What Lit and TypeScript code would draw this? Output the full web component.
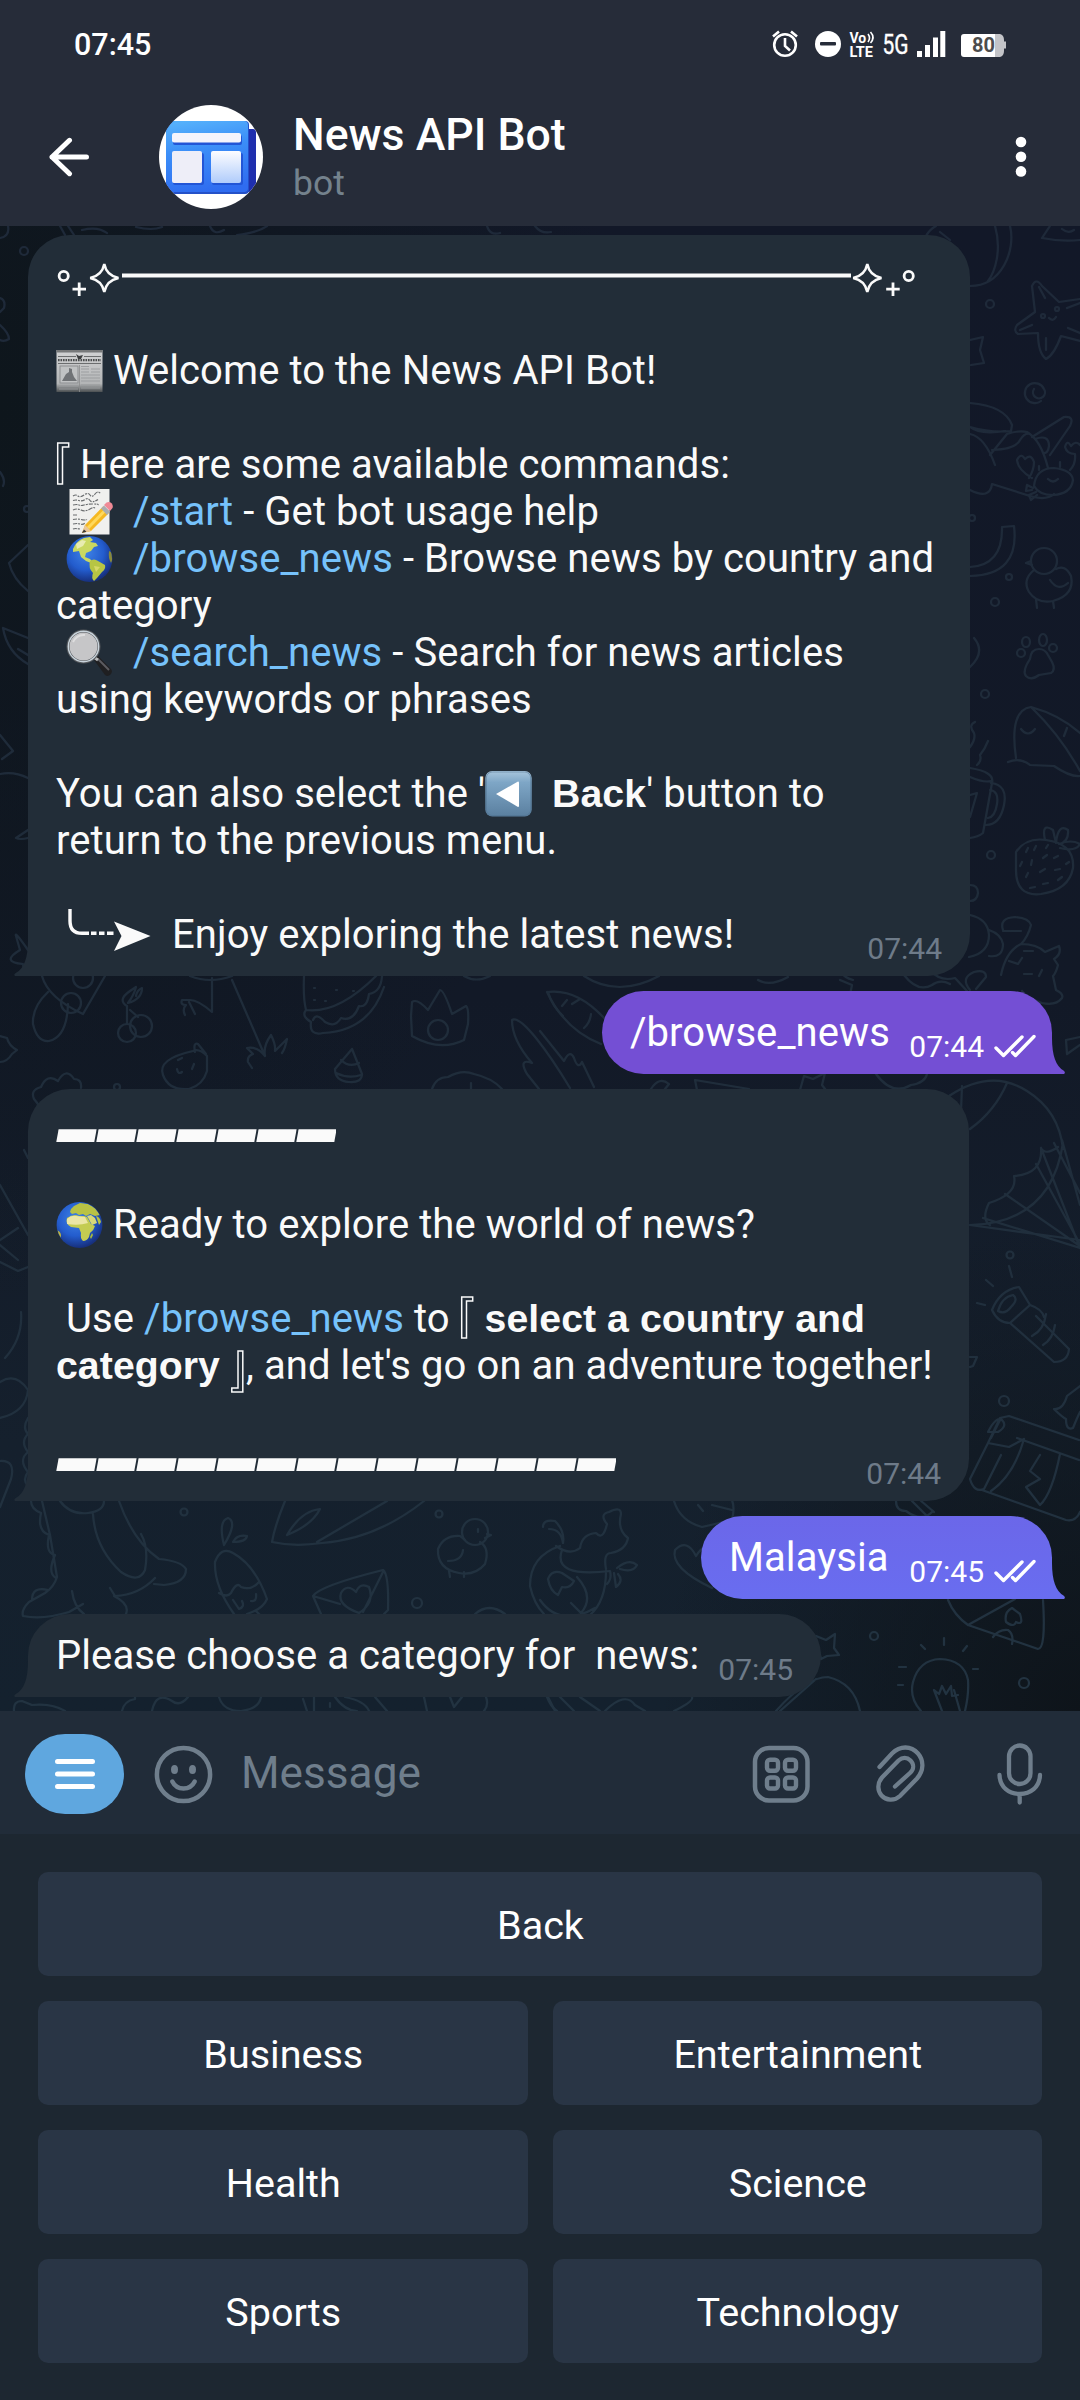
import { LitElement, html, css, svg, nothing } from "lit";
import { customElement, property } from "lit/decorators.js";

/* ---------- inline emoji and ornaments, each 47px tall like a text line ---------- */

const newspaper = html`<svg class="emo" width="47" height="47" viewBox="0 0 47 47">
  <defs><linearGradient id="np" x1="0" y1="0" x2="0" y2="1"><stop offset="0" stop-color="#d2d3d4"/><stop offset=".8" stop-color="#b3b5b6"/><stop offset="1" stop-color="#4c5052"/></linearGradient></defs>
  <rect x=".5" y="3" width="46" height="42" fill="url(#np)"/>
  <rect x=".5" y="3" width="46" height="2.500" fill="#77797a"/>
  <path d="M2 9.500h18M28 9.500h17M2 16.500h43" stroke="#6b6d6e" stroke-width="1"/>
  <path d="M20 7l3 2 4-1-2 4h-3z" fill="#3c3e3f"/>
  <path d="M2 13.200h43" stroke="#4b4d4e" stroke-width="2.200" stroke-dasharray="1.600 .9"/>
  <rect x="4" y="19" width="18" height="17" fill="#c0c2c3" stroke="#8c8e90"/>
  <path d="M6 34l4-7 3-2v-4l3 1v3l2 5 3 4z" fill="#707376"/>
  <path d="M25 19.500h8M25 22h8M25 25h8M25 28h19M25 31h19M25 34h19M35 22h9M35 25h9M3 39h19M3 42h19M25 38h19M25 41h19" stroke="#989b9d" stroke-width=".9"/>
  <path d="M23.500 18v27" stroke="#8b8d8e" stroke-width=".8"/>
</svg>`;

const memo = html`<svg class="emo" width="47" height="47" viewBox="0 0 47 47">
  <rect x="3.500" y="1" width="40" height="45.500" fill="#f0f0ee"/>
  <path d="M7 8q3-2 5 0t6-1 6 0 5-1 6 0M7 12.500q3-1 6 0t6-1 5 1 8-1M7 17q4-1 6 0t5 0 9-1 5 1M7 22q4-2 8 0t9-1 5 0M7 27h5M7 31.500q4-1 8 0t6 0M7 36q4-1 7 0t5-1M7 41q2-1 7 0" fill="none" stroke="#6a6d6f" stroke-width="1.200" stroke-dasharray="4 1 2 1"/>
  <path d="M19 37L37 18.500 43 25 25 43 16 45z" fill="#f5b822"/>
  <path d="M22 40L40 21.500" stroke="#ffd95c" stroke-width="3"/>
  <path d="M19 37l6 6-9 2z" fill="#e9c79a"/><path d="M18 41.500l2.500 2.300-4.700 1.200z" fill="#3a3836"/>
  <path d="M35 20.500l3-3 6 6-3 3.500z" fill="#a9adb0"/>
  <path d="M38 17l2.500-2.500q3-1.500 5 .8t1 4.700L44 23z" fill="#f08a96"/>
</svg>`;

const globe = (id: string, land: unknown) => html`<svg class="emo" width="47" height="47" viewBox="0 0 47 47">
  <defs>
    <radialGradient id=${id} cx=".42" cy=".35" r=".65"><stop offset="0" stop-color="#3f83e6"/><stop offset=".6" stop-color="#235ccd"/><stop offset="1" stop-color="#17307e"/></radialGradient>
    <clipPath id="${id}c"><circle cx="23.500" cy="24" r="22.600"/></clipPath>
  </defs>
  <circle cx="23.500" cy="24" r="22.900" fill="url(#${id})"/>
  <g clip-path="url(#${id}c)">${land}</g>
</svg>`;

const americas = () => globe("ga", svg`
  <path d="M7 14q3-8 11-11l6-1 3 3-3 2 6 1 2 3-4 1-3 4-5 2-1 4 5 2 3 3-2 1-5-2-5-4-2-6-6 1z" fill="#c9d860"/>
  <path d="M10 9l6-4 4 1-3 5-6 3z" fill="#e8ecb0"/>
  <path d="M24 26q4-3 8 0l7 4q1 4-3 7l-5 6-3 3q-3-3-1-8-5-5-3-12z" fill="#b7c544"/>
  <path d="M28 31l6 1-4 5z" fill="#d7d968"/>
  <path d="M43 16q4 1 4 8l-2 4q-3-5-2-12z" fill="#8a8a3a"/>`);

const africa = () => globe("gb", svg`
  <path d="M15 8l3-3 6-3 8 1 7 4 5 7-5 1-5-2-4 2-3-2-4 1-3-2-4 1-2-2z" fill="#b9c244"/>
  <path d="M11 17q4-3 9-3l3 1 5 0 3 1 4 7 4 2q-1 4-5 7l-1 4q-2 4-6 4-3-3-2-8l-2-5-8-1q-6-3-4-9z" fill="#c4cc52"/>
  <path d="M11 18q4-4 9-3l9 1 3 6q-9 3-21 1z" fill="#ebe6a6"/>
  <path d="M31 15l4-1 4 3 2 5-5 2z" fill="#d8d878"/>
  <path d="M40 15q4 1 5 6l-2 3z" fill="#b9c244"/>
  <path d="M0 29q5 1 5 6l-2 5-3-2z" fill="#c2b83b"/>
  <path d="M34 36l2-4 1 2-2 4z" fill="#a9bb3b"/>`);

const magnifier = html`<svg class="emo" width="47" height="47" viewBox="0 0 47 47">
  <path d="M28 31l4-4 13 13q2 3-.5 5.500t-5.500.5z" fill="#1f1f21"/>
  <path d="M32 30l11 11" stroke="#5c5c60" stroke-width="2"/>
  <path d="M26 27l6 4" stroke="#b8babc" stroke-width="3"/>
  <circle cx="17.500" cy="17.500" r="15.500" fill="#c6c6c8" stroke="#54575b" stroke-width="3"/>
  <circle cx="17.500" cy="17.500" r="15.200" fill="none" stroke="#c9d4dc" stroke-width="1.400"/>
  <path d="M7 13q4-8 12-7" fill="none" stroke="#dededf" stroke-width="2"/>
</svg>`;

const backKey = html`<svg class="emo" width="47" height="47" viewBox="0 0 47 47">
  <defs><linearGradient id="bk" x1="0" y1="0" x2="0" y2="1"><stop offset="0" stop-color="#a9c6dd"/><stop offset=".25" stop-color="#7ea6c6"/><stop offset="1" stop-color="#5a7f9f"/></linearGradient></defs>
  <rect x=".3" y="1" width="46.400" height="45.600" rx="7" fill="url(#bk)"/>
  <rect x="1.300" y="2" width="44.400" height="43.600" rx="6" fill="none" stroke="#4d708e" stroke-opacity=".5"/>
  <path d="M11 24L33 11.500q1 0 1 1v23.500q0 1-1 1z" fill="#fff"/>
</svg>`;

const bracketOpen = html`<svg class="emo" width="14" height="47" viewBox="0 0 14 47"><path d="M1.700 43V2h11v4H6.500v37z" fill="none" stroke="#fafafa" stroke-width="1.500"/></svg>`;
const bracketClose = html`<svg class="emo tall" width="15" height="52" viewBox="0 0 15 52"><path d="M11.800 9v41H.8v-4h6.200V9z" fill="none" stroke="#fafafa" stroke-width="1.500"/></svg>`;

const bars = (n: number) => html`<svg class="emo" width=${n * 40} height="47" viewBox="0 0 ${n * 40} 47">
  ${Array.from({ length: n }, (_, i) => svg`<path d="M${i * 40 + 2.6} 22.300h38l-2.300 12.700h-38z" fill="#fafafa"/>`)}
</svg>`;

const divider = html`<svg class="emo" width="862" height="47" viewBox="56 253 862 47" fill="none" stroke="#fafafa">
  <circle cx="63.700" cy="276" r="4.600" stroke-width="2.800"/>
  <path d="M79.200 282.500v13.500M72.500 289.200h13.500" stroke-width="2.800"/>
  <path d="M104.300 264Q106.500 275.500 118.500 278Q106.500 280.500 104.300 292Q102 280.500 90.200 278Q102 275.500 104.300 264z" stroke-width="2.500"/>
  <path d="M122 275.600H851" stroke-width="4"/>
  <path d="M867.300 264Q869.500 275.500 881.500 278Q869.500 280.500 867.300 292Q865 280.500 853.200 278Q865 275.500 867.300 264z" stroke-width="2.500"/>
  <path d="M893 282.500v13.500M886.200 289.200h13.500" stroke-width="2.800"/>
  <circle cx="908.700" cy="276" r="4.600" stroke-width="2.800"/>
</svg>`;

const curlArrow = html`<svg class="emo" width="86" height="47" viewBox="66 911 86 47" overflow="visible">
  <path d="M70 909v12q0 12.300 12 12.300h7M91 933.300h5.500M99 933.300h5.500M107 933.300h6.500" fill="none" stroke="#fafafa" stroke-width="3.400"/>
  <path d="M114 921.500L150.500 936 114 951l7.500-15z" fill="#fafafa"/>
</svg>`;

const ticks = html`<svg class="ticks" width="42" height="26" viewBox="0 0 42 26" fill="none" stroke="#fff" stroke-width="3.400" stroke-linecap="round" stroke-linejoin="round">
  <path d="M2 15l7.500 7.500L28 4M18.500 19.500l3 3L40 3.500"/>
</svg>`;

/* ---------- wallpaper doodles, in page coordinates ---------- */

const doodles = svg`
  <path d="M926 236Q930 229 936 226M1010 226C1016 250 1002 286 970 286M995 226C1002 250 995 272 988 281M940 232l10 8M1050 226l-8 12q20 4 38 2M1062 229q6 5 12 1"/>
  <circle cx="990" cy="304" r="4"/><circle cx="995" cy="602" r="4"/><circle cx="1009" cy="577" r="3"/><circle cx="985" cy="694" r="4"/><circle cx="991" cy="855" r="4"/><circle cx="972" cy="518" r="3"/>
  <path d="M1080 299l-21 3-17-16q-6-9-10 0l3 26-18 13q-4 6 1 9l20-1q0 20 8 26 8-4 15-23l19 5M1039 287l6 11M1020 330l12-5M1046 338v12M1067 308l13-5M1068 328l12 5M1049 318q4 4 7-1"/>
  <circle cx="1043" cy="316" r="2"/><circle cx="1057" cy="309" r="2"/>
  <path d="M970 340l13-3-3 13 4 13-13 2"/>
  <path d="M1041 401a10 10 0 1 1 3-12a6 6 0 1 1-10 0"/>
  <path d="M970 403Q1005 406 1012 425l-1 6q-20 2-41-4M970 434q15 3 25 31M970 427q10 8 35 4M990 455l17-21q12-4 20-2 14 8 21 36M992 450q24-1 28-10 5-8 10-6M1032 437l32-20q11-1 6 9l-20 29M1035 439q14-5 14 7-1 8-6 7M970 490q20 10 22-6l38 12q16 5 24-2"/>
  <path d="M1034 486q2-18 20-18 18 2 19 12-2 14-20 15-14 0-19-9zM1048 479q5 5 10 0M1032 478q-14-8-15-18 4-8 8-1 6-6 9 3 0 8-5 16M1070 470q6-6 5-16-8 0-10-7 2-8 6-1 5-6 9-1M1033 488l-6-3-1 6 6-1M1036 492l-7 3 2 5 6-5M1039 470v-4M1060 467v-5"/>
  <path d="M1002 527l12-1Q1020 575 970 576M1002 527Q1003 565 970 567"/>
  <circle cx="1044" cy="561" r="13"/><path d="M1031 561l-5 2 6 2M1034 570q-12 10-5 22 8 12 24 9 22-6 18-25-6-12-15-7M1050 580q8 12 18 3M1036 599l1 9M1053 601l1 7"/>
  <path d="M1039 649q-8 0-9 10-8 12-4 17 5 5 13-1l12-2q5-3 1-11l-4-7q-3-6-9-6z"/>
  <ellipse cx="1026" cy="642" rx="4" ry="5"/><ellipse cx="1043" cy="640" rx="4" ry="6"/><ellipse cx="1053" cy="648" rx="4" ry="4"/><ellipse cx="1021" cy="653" rx="4" ry="4"/>
  <path d="M974 638q12 14-4 29M1016 758Q1009 710 1031 707Q1060 715 1080 733M1032 708q28 27 48 63M1008 762q12-5 22 3l24 1q16 11 26 10M1021 729q7 9 14 0M1067 728l-3 8"/>
  <path d="M970 768q25 4 22 15l-9 50q-5 4-13 5M970 777q14 6 21 4M991 783q17 2 13 22-4 20-18 20M990 790q9 1 7 14-2 13-9 14M977 765q5-4 3-10 5-6 8-14M970 747q6-8 4-14-6-8 1-11M970 795l7-2-7 24"/>
  <path d="M1016 852q10-15 30-12 29 4 27 28-4 22-32 26-25 3-25-24zM1045 840q-4-18 8-10l3 13q2-20 12-13 1 12-9 14 12-5 21 0-4 8-20 4"/>
  <path d="M1026 852l2-4M1034 850l2-4M1046 848l2-3M1022 862l-2 4M1032 860l-1 5M1043 858l4-3M1054 858l4-2M1028 873l-2 4M1040 872l5-3M1055 870l5-1M1030 888l5-1M1043 884l5-1M1058 880l4-3M1066 864l3-2" />
  <path d="M970 885q8 0 8 8-1 8-8 8M970 915q18 4 19 20 0 18-20 22M989 930q12 4 14 14 0 14-14 12M1003 930q-4-12 12-13 14 1 16 8-3 12-10 19 16 0 24 8l14-6q3 8-5 13l4 6q-2 8-5 11l3 14q8 4 6 8-6 8-20 5-16-5-20-12M1003 931l18 0M1001 975q5-24 20-31M1024 951h9M1024 974h8M1009 961l9 3 4-6M1042 970l-3 6"/>
  <path d="M904 975q14 18 28 10 8-6 18-1M970 990q-10-12 4-18 12-3 12 5l-10 12M930 970q10 12 25 8l12 13"/>
  <path d="M547 992q30-4 58 27M547 992q18 38 54 52M572 1004l8-5M562 1006l5-6M584 1028q6-5 7-14M540 1031l24 30q6-12 10-3 4 12 8 4l12 25"/>
  <path d="M672 998q10-2 20 1M584 976q34 22 75 0M840 980l12 5-2 10M845 960q-10 15 8 20M758 980q12 7 30-3M842 997q8-8 12 0"/>
  <path d="M876 1074q16 22 35 11 14-2 16-11M800 1090l4-14 9 3 12-6-3 12 6 8-12 1-4 6zM697 1090l-2-10 54 9M651 1089q8-13 18-5l-4 5M1080 1045l-13 9-1-14 14-3"/>
  <path d="M949 1096q42-28 78-5 32 20 36 58M962 1086l-1 25M1007 1083q-12 28-37 46M970 1225l110 15M1041 1148l39 100M1036 1164l44 80M1054 1143l26 50M1062 1140l18 65M1041 1148q4 8 17-1M1041 1148q2 26-27 28 4 18-25 27-8 16 1 22M1063 1143q-12 80-93 82M1005 1194l75 52M983 1218l97 30"/>
  <circle cx="1010" cy="1255" r="3.500"/><circle cx="1004" cy="1401" r="5"/>
  <path d="M1009 1266l3 11M986 1280l7 6M977 1303l8 2M992 1310q8-20 27-23l11 18-20 18q-12 0-18-13zM998 1311q4-14 15-16 6 4-2 12-6 8-13 4zM1010 1323l44 39q14 0 15-13l-33-33M1030 1305q12 4 14 12M1032 1336q12-6 14-22M1043 1345q10-6 12-20"/>
  <path d="M970 1357l7 0-4 9-3 1M1080 1386l-13 10q-4 14-13 13 8 8 12 10 0 12 7 9 4-10 7-16"/>
  <path d="M988 1443l12-25 9-2 70 24M988 1443l-18 36q4 14 14 10l17-34M988 1443l21 4 15-8M982 1490l84 30q10 2 14-8M1024 1439q-10 36-33 52M1017 1438l62 22M1060 1454q-8 40-20 51l-14-18 14-8-10-8 10-16M1001 1418l-10 20M988 1432q8-16 14-12 6 6-4 12z"/>
  <path d="M896 1501q0 10 10 10 16 12 27 0M912 1501l14 14M920 1500l14 12M674 1501q6 20 28 26l30-7q3-12 0-20M698 1505l5 6M712 1505l20 5"/>
  <path d="M712 1588q-42-20-37-38 12-12 21 6 10-16 22-8"/>
  <path d="M543 1527q0-8 12-6 10 10 8 22-2-14-14-14M556 1546q14 10 24 2 2-14 16-15 7 8 11-9-8-10 2-12 12-6 12 2-4 16 7 24-2 12-17 15-8 0-5 16M562 1550q-10 28 48 21 2 8-3 13M606 1571q0 30-16 44M540 1600q20 28 55 8M617 1568q12-10 20-3-4 8-17 4M614 1573l2 14q8-6 2-13M548 1579q4-10 14-6l12 8q-4 8-12 6l-4 8q-8-4-10-16zM577 1577q18 20 4 36l-10-10"/>
  <path d="M948 1600q6 15 20 25l70 24q8 0 5-49M968 1625l47-26M993 1637q6-8 15-7 6 4 4 14M1012 1608q-8 4-6 14 8 6 10 0 8 4 4-8z"/>
  <circle cx="874" cy="1636" r="4"/><circle cx="1024" cy="1683" r="5"/>
  <path d="M816 1636l10 4 9-6-1 14 5 7-12 1-6 3-2-8"/>
  <path d="M921 1711q-12-13-8-29 6-22 27-23 24 1 28 21 1 14-3 31M942 1711l-8-21 5 4 3-8 4 8 5-8 1 10 6-1M954 1690l6 21M944 1638v7M921 1645l4 4M967 1646l-4 5M899 1667h7M898 1685h5M973 1669h5"/>
  <path d="M776 1711q30-34 52-34 26 6 32 34M780 1711l36-32M547 1697q4 10 10 14M560 1697l14 14M580 1697l20 14M605 1711q20-20 30-6l10 6M674 1711q20-10 18-14"/>
  <circle cx="24" cy="251" r="4"/><circle cx="27" cy="509" r="3"/>
  <path d="M0 238q10-2 8-12M60 226l5 9M68 226l6 9M82 230q16-4 25 3M136 227q16 4 26 0M210 226q4 10 14 4M237 235q20-2 30-9M487 226q3 10 13 7M535 226q6 8 16 6M0 298q6 2 4 10l-4 4M0 325q9 8 9 14-5 3-9 1M0 472q6 8 3 14M28 545L9 563q4 16 19 28M0 735l13 16-11 8M0 774q14-3 28 4M28 830q-12 8-12 8 4 2 12 0M3 628q4 24 25 36M3 628l25 10M28 950q-14-20-12-14l4 14q-20 12 3 14l1 9M28 655l-10-6"/>
  <path d="M42 976q6 22 41 38l22-38M48 992q-16 15-15 32 4 18 16 17 18-4 19-37"/>
  <circle cx="83" cy="978" r="10"/><circle cx="71" cy="1003" r="10"/>
  <circle cx="127" cy="1033" r="9"/><circle cx="141" cy="1026" r="11"/>
  <path d="M127 1024v-18q-10-6 3-15l6-4q-2 8-8 16 14-4 14-15-5 2-6 8M130 1010l8 7"/>
  <path d="M190 976q20 8 42 0M212 978v34q-14-12-22-12l-8 0q-2 5 4 5-4 4-1 10M189 1002q4 8 6 12M232 980l33 76M265 1056q-8-10-18-8l6 6q-6 2-5 8l4 6M265 1056q-2-10 6-21 5 10 4 16l12-12q-2 10-5 14"/>
  <path d="M304 976q-1 22 2 34 32 4 70-34M306 1010q-5 6 5 12-2 14 12 11 46-2 61-46M313 1020q3-8 12 2 10 6 16-4 12 4 18-12 8 2 10-12 12-2 13-18M314 1000h1M325 1001h1M336 990h1M314 988h1M353 991h1"/>
  <path d="M412 1002q5-4 16 8l12-20q4 0 12 24l14-8q3 2 2 18l-4 16q-24 12-52-4l-1-20z"/><circle cx="438" cy="1030" r="10"/>
  <path d="M464 976q12 7 26 0M512 1020q6-4 24 18 16 20 34 50M512 1020q0 20 20 43-14-5-5 11l12 15M548 992q4 14 15 24M432 1089q4-12 16-12 14-8 26-3 18 4 28 15M471 1083v6"/>
  <path d="M352 1049l-17 20q0 12 14 13 13 1 13-8zM341 1060q8 8 18 3M336 1073q12 6 25 2"/>
  <path d="M193 1051q-36 8-30 24 6 16 26 14 14-4 18-18v-15q-8-8-14-5zM195 1052q-2-10 3-8l8 10M178 1060l4-2M177 1069q1 6 5 3M192 1069l2-5"/>
  <circle cx="117" cy="1087" r="3"/>
  <path d="M34 1099q-4-9 7-12 6-14 17-6 8-14 16-2 8 0 7 9M34 1099l4 5-6 28M0 1036l7 2q2 8 10 12l-5 4q-5 8-12 8M24 1150l4 8M0 1185l28 50M0 1240l18-12M0 1262l18 9 10-4M0 1245l18 15M21 1312q2 26-16 46M0 1418q26-6 28-28-12-18-28-8M28 1418q-6 10 0 16-8 8 0 18-10 8 0 20-6 8 0 14M0 1461q16-1 11 18l-11 28"/>
  <path d="M42 1501l8 34 7 42q-3 10-12 16l-16 9q-8 8-6 14 20 4 46-4l14-8M31 1501q0 8 10 12-4 18 8 22-4 18 6 20-8 18 1 23M32 1600q0-14 16-10M60 1501q10 14 28 12 16-2 16-12M93 1514q2 34 28 58 18 12 24-2 4-22-4-36M119 1501q14 40 40 58 22 2 27 10 0 14-22 16l-10-1M110 1588l5 8q24-1 40-18M72 1591q2 16 12 23M114 1596q16 8 12 18"/>
  <circle cx="184" cy="1512" r="3.500"/><circle cx="439" cy="1514" r="3.500"/><circle cx="417" cy="1603" r="5"/>
  <path d="M285 1501q-10 24-13 41 22 5 50 1 54-4 102-42M317 1542l70-41M287 1535q14-24 33-26-8 16-33 26zM224 1545q-6-24 4-27 10 4-4 27zM233 1542q4-8 14-6-1 6-14 6z"/>
  <path d="M234 1614q-20-28-19-52 6-16 18-9 22 12 34 46-4 10-20 15M219 1593q8 5 12 0 6-12 10-6 10 4 18-5M233 1600l6 9q6-2 3-8M256 1594q1 8-5 7M256 1611l4 4"/>
  <path d="M321 1614l-8-18q6-10 70-26 6 4 5 40l-4 4M313 1596l27 8M383 1572l-20 40M359 1613q-22-8-18-20 6-10 15-1 4-10 13-5 6 16-10 26M475 1614q14-12 30 0"/>
  <circle cx="475" cy="1532" r="13"/><path d="M487 1534l4 1-6 3M480 1542q10 6 5 22-10 12-26 9-22-4-21-24 6-14 22-13l5 4M448 1561q14 0 15-11M449 1571l1 6M464 1572v5M478 1529v3"/>
  <path d="M560 1546q-30 10-30 40 4 18 14 28M14 1711q-1-10 8-10 10 4 10 4 20-2 33 6M122 1711q2-10 13-12l0-2M152 1711q4-20 20-10 8 6 16-4M219 1697q4 14 22 14 18-2 20-14M303 1699l4 12M314 1697v14M335 1697q10 14 22 14M345 1697q20 4 24 14M375 1697l12 14M424 1697l3 14M450 1697l4 10 8-10M484 1711q5-6 2-14M548 1697l7 14M330 1703v4"/>
`;

const wallpaper = html`<svg class="wall" width="1080" height="1485" viewBox="0 226 1080 1485">
  <defs>
    <linearGradient id="dl" gradientUnits="userSpaceOnUse" x1="0" y1="226" x2="0" y2="1711">
      <stop offset="0" stop-color="#1e2939"/><stop offset=".5" stop-color="#1f2c3a"/><stop offset="1" stop-color="#223341"/>
    </linearGradient>
  </defs>
  <g fill="none" stroke="url(#dl)" stroke-width="2.200" stroke-linecap="round" stroke-linejoin="round">${doodles}</g>
</svg>`;

/* ---------- message bubble ---------- */

@customElement("chat-bubble")
class ChatBubble extends LitElement {
  @property() time = "";
  @property({ type: Boolean, reflect: true }) out = false;
  @property({ type: Boolean, reflect: true }) large = false;

  static styles = css`
    :host { display: block; position: relative; box-sizing: border-box; padding: 18px 28px; border-radius: 42px 42px 42px 0;
      background: #222d38; color: #fafafa; align-self: flex-start; margin-left: 28px; font-size: 40px; line-height: 47px; letter-spacing: .08px; }
    :host([out]) { align-self: flex-end; margin: 0 28px 0 0; background: var(--tint); color: #fff; border-radius: 42px 42px 0 42px; padding-right: 16px; }
    .row { display: flex; align-items: flex-end; justify-content: space-between; }
    .stack { display: grid; }
    .stack > * { grid-area: 1 / 1; }
    .stack > .time { place-self: end; }
    .time { font-size: 30px; line-height: 35px; color: #6e7b89; display: flex; align-items: center; margin-bottom: -8px; letter-spacing: 0; }
    :host([out]) .time { color: #fff; margin-bottom: -7.500px; }
    .tail { position: absolute; left: -14px; bottom: 0; }
    :host([out]) .tail { left: auto; right: -14px; }
    svg { display: block; flex: none; }
    .ticks { margin-left: 10px; }
  `;

  render() {
    return html`
      <svg class="tail" width="15" height="36" viewBox="0 0 15 36">
        <path d=${this.out ? "M0 0H1Q1 26 12.500 32.500Q15 34.500 13 36H0z" : "M15 0H14Q14 26 2.500 32.500Q-1 34.500 1 36H15z"}
          fill=${this.out ? "var(--tint-end)" : "#222d38"} />
      </svg>
      <div class=${this.large ? "stack" : "row"}>
        <div><slot></slot></div>
        <div class="time">${this.time}${this.out ? ticks : nothing}</div>
      </div>`;
  }
}

const line = (content: unknown = nothing) => html`<div class="line">${content}</div>`;
const cmd = (t: string) => html`<span class="cmd">${t}</span>`;

@customElement("app-root")
class AppRoot extends LitElement {
  static styles = css`
    :host { display: flex; flex-direction: column; width: 1080px; height: 2400px; overflow: hidden;
      font-family: Roboto, "Liberation Sans", sans-serif; background: #1d2731; color: #fff; }
    svg { display: block; flex: none; }

    .head { height: 226px; background: #262c39; flex: none; }
    .status { height: 88px; box-sizing: border-box; padding: 1px 68px 0 74px; display: flex; align-items: center; font-size: 30.500px; font-weight: 500; }
    .icons { margin-left: auto; margin-top: -1px; overflow: visible; }
    .bar { height: 138px; display: flex; align-items: center; padding: 0 48px 0 49px; }
    .avatar { margin-left: 70px; }
    .who { margin-left: 30px; margin-right: auto; display: flex; flex-direction: column; }
    .name { font-size: 44.600px; line-height: 52px; font-weight: 500; margin-top: -1px; }
    .kind { font-size: 35.500px; line-height: 42px; margin-top: 1px; color: #74828d; }

    .chat { position: relative; flex: none; height: 1485px; box-sizing: border-box; padding: 9px 0 14px; display: flex; flex-direction: column; gap: 15px;
      background: radial-gradient(ellipse 600px 700px at 100% 100%, #0e141a 0%, transparent 70%), radial-gradient(ellipse 620px 900px at 0% 12%, #0e161c 0%, transparent 100%),
        linear-gradient(180deg, #121828 0%, #121927 52%, #15202d 82%, #14212e 100%); }
    .wall { position: absolute; left: 0; top: 0; }
    .line { height: 47px; white-space: pre; }
    .emo { display: inline-block; vertical-align: top; }
    .tall { margin-bottom: -5px; }
    .cmd { color: #76c2fb; }
    .strong { font: bold 39.200px/47px "Liberation Sans", Arial, sans-serif; }
    .b1 { width: 942px; }
    .b2 { width: 450px; --tint: #744fd4; --tint-end: #7450d5; }
    .b3 { width: 941px; }
    .b4 { width: 351px; --tint: linear-gradient(#6b67e9, #696df0); --tint-end: #696df0; }
    .b5 { width: 793px; }

    .compose { height: 123px; flex: none; box-sizing: border-box; background: #212c39; display: flex; align-items: center; padding: 3px 36px 0 25px; }
    .menu { width: 99px; height: 80px; border-radius: 40px; background: #5fa7df; display: flex; align-items: center; justify-content: center; }
    .smile { margin-left: 30px; }
    .hint { font-size: 44.200px; line-height: 52px; color: #6f7e8c; margin-left: 28px; margin-right: auto; margin-top: -2px; }
    .apps { margin-right: 65px; }
    .clip { margin-right: 70px; }

    .keys { padding: 38px 38px 37px; display: grid; grid-template-columns: 1fr 1fr; gap: 25px; }
    .key { height: 104px; box-sizing: border-box; padding: 2px 0 0 1px; border-radius: 10px; background: #293545; font-size: 39.500px; display: flex; align-items: center; justify-content: center; }
    .wide { grid-column: 1 / -1; }
  `;

  private keys = ["Back", "Business", "Entertainment", "Health", "Science", "Sports", "Technology"];

  render() {
    return html`
      <header class="head">
        <div class="status">
          <span>07:45</span>
          <svg class="icons" width="241" height="52" viewBox="771 17 241 52">
            <g fill="none" stroke="#fff" stroke-width="2.600" stroke-linecap="butt">
              <circle cx="785" cy="44" r="10.800"/><path d="M785 37v8l5 4.500M773 35.500l6-5M797 35.500l-6-5" />
            </g>
            <circle cx="828" cy="43" r="13" fill="#fff"/><rect x="820" y="41" width="16" height="3.600" rx="1" fill="#262c39"/>
            <text x="849.500" y="42.300" font-size="14" font-weight="700" fill="#fff">Vo</text>
            <path d="M868 33q3 4 0 8M870.500 31q5 5.500 0 11" fill="none" stroke="#fff" stroke-width="1.600"/>
            <text x="849.500" y="56" font-size="14.500" font-weight="700" fill="#fff">LTE</text>
            <text x="882.500" y="52.700" font-size="27" font-weight="400" fill="#fff" stroke="#fff" stroke-width=".4" textLength="26" lengthAdjust="spacingAndGlyphs">5G</text>
            <path d="M917 50h5v6h-5zM925 44h5v12h-5zM933 36.500h5V56h-5zM940.300 30h5v26h-5z" fill="#fff"/>
            <path d="M995 33h5q4 1 4 6v1.500h2v7h-2V50q0 5-4 6h-5z" fill="#c3c4c8"/>
            <path d="M964 33h31v23h-31q-3 0-3-3V36q0-3 3-3z" fill="#fff"/>
            <text x="972" y="51.300" font-size="20" font-weight="700" fill="#4d4d4d">80</text>
          </svg>
        </div>
        <div class="bar">
          <svg width="40" height="40" viewBox="0 0 40 40" fill="none" stroke="#fff" stroke-width="5" stroke-linecap="round" stroke-linejoin="round"><path d="M37.500 20H3M20.500 3.300L3 20l17.500 16.700"/></svg>
          <svg class="avatar" width="104" height="104" viewBox="159 105 104 104">
            <defs>
              <linearGradient id="pg" x1=".3" y1="0" x2=".5" y2="1"><stop offset="0" stop-color="#55b0fb"/><stop offset=".4" stop-color="#3b8ef8"/><stop offset="1" stop-color="#2f6cf0"/></linearGradient>
              <linearGradient id="rb" x1="0" y1="0" x2="0" y2="1"><stop offset="0" stop-color="#fdfdff"/><stop offset="1" stop-color="#b0ccfb"/></linearGradient>
              <clipPath id="av"><circle cx="211" cy="157" r="52"/></clipPath>
            </defs>
            <circle cx="211" cy="157" r="52" fill="#fff"/>
            <g clip-path="url(#av)">
              <rect x="240" y="129" width="16" height="63" rx="3" fill="#1f2fae"/>
              <rect x="166" y="121" width="83" height="73" rx="4" fill="#2451c8"/>
              <rect x="166" y="121" width="82" height="71" rx="4" fill="url(#pg)"/>
              <g fill="#2255d6"><rect x="173" y="135" width="69" height="10" rx="2"/><rect x="173" y="153" width="31" height="32" rx="2"/><rect x="212" y="153" width="31" height="32" rx="2"/></g>
              <rect x="172" y="133" width="69" height="9.500" rx="2" fill="#f4f4fc"/>
              <rect x="172" y="151" width="30" height="32" rx="2" fill="#eeeef8"/>
              <rect x="211" y="151" width="30" height="32" rx="2" fill="url(#rb)"/>
            </g>
          </svg>
          <div class="who"><div class="name">News API Bot</div><div class="kind">bot</div></div>
          <svg width="22" height="44" viewBox="0 0 22 44" fill="#fff"><circle cx="11" cy="7" r="5.300"/><circle cx="11" cy="21.700" r="5.300"/><circle cx="11" cy="36.400" r="5.300"/></svg>
        </div>
      </header>

      <main class="chat">
        ${wallpaper}
        <chat-bubble class="b1" large time="07:44">
          ${line(divider)}${line()}
          ${line(html`${newspaper} Welcome to the News API Bot!`)}${line()}
          ${line(html`${bracketOpen} Here are some available commands:`)}
          ${line(html` ${memo}  ${cmd("/start")} - Get bot usage help`)}
          ${line(html` ${americas()}  ${cmd("/browse_news")} - Browse news by country and`)}
          ${line("category")}
          ${line(html` ${magnifier}  ${cmd("/search_news")} - Search for news articles`)}
          ${line("using keywords or phrases")}${line()}
          ${line(html`You can also select the '${backKey}  <span class="strong">Back</span>' button to`)}
          ${line("return to the previous menu.")}${line()}
          ${line(html` ${curlArrow}  Enjoy exploring the latest news!`)}
        </chat-bubble>
        <chat-bubble class="b2" out time="07:44">${line("/browse_news")}</chat-bubble>
        <chat-bubble class="b3" large time="07:44">
          ${line(bars(7))}${line()}
          ${line(html`${africa()} Ready to explore the world of news?`)}${line()}
          ${line(html` Use ${cmd("/browse_news")} to ${bracketOpen}<span class="strong"> select a country and</span>`)}
          ${line(html`<span class="strong">category </span>${bracketClose}, and let's go on an adventure together!`)}${line()}
          ${line(bars(14))}
        </chat-bubble>
        <chat-bubble class="b4" out time="07:45">${line("Malaysia")}</chat-bubble>
        <chat-bubble class="b5" time="07:45">${line("Please choose a category for  news:")}</chat-bubble>
      </main>

      <section class="compose">
        <div class="menu"><svg width="40" height="32" viewBox="0 0 40 32" stroke="#fff" stroke-width="5" stroke-linecap="round"><path d="M2.500 3.500h35M2.500 16h35M2.500 28.500h35"/></svg></div>
        <svg class="smile" width="59" height="59" viewBox="0 0 59 59" fill="none" stroke="#6f7e8c" stroke-width="4.500" stroke-linecap="round">
          <circle cx="29.500" cy="29.500" r="26.600"/><path d="M18.300 36.500q3.500 7 11.200 7t11.200-7"/>
          <g fill="#6f7e8c" stroke="none"><ellipse cx="20.500" cy="24.500" rx="3.500" ry="4.500"/><ellipse cx="38.500" cy="24.500" rx="3.500" ry="4.500"/></g>
        </svg>
        <div class="hint">Message</div>
        <svg class="apps" width="58" height="58" viewBox="753 1745.500 58 58" fill="none" stroke="#6f7e8c">
          <rect x="756" y="1748.500" width="52.500" height="52.500" rx="14" stroke-width="4.500"/>
          <g stroke-width="4.400"><rect x="768" y="1760.200" width="11" height="11" rx="3"/><rect x="786" y="1760.200" width="11" height="11" rx="3"/><rect x="768" y="1778" width="11" height="11" rx="3"/><rect x="786" y="1778" width="11" height="11" rx="3"/></g>
        </svg>
        <svg class="clip" width="51" height="58" viewBox="876 1745.500 51 58" fill="none" stroke="#6f7e8c" stroke-width="4.300" stroke-linecap="round">
          <path d="M880.500 1767.500L893 1754C901 1746 912 1746 919 1754C925 1761 925 1771 918 1779L901 1796.500C895 1802 887 1801 882.500 1796C878 1791 878.500 1783 883 1778L899.500 1761C903.500 1757.500 908 1757.500 911.500 1761C915 1764.500 915 1769.500 911.500 1773L896 1787"/>
        </svg>
        <svg width="48" height="64" viewBox="997 1742.500 48 64" fill="none" stroke="#6f7e8c" stroke-width="4.300" stroke-linecap="round">
          <rect x="1010" y="1746" width="21.500" height="38.500" rx="10.750"/><path d="M1000.500 1775.500C1001 1788 1010 1794.500 1020.700 1794.500S1040.500 1788 1041 1775.500M1020.700 1795v8"/>
        </svg>
      </section>

      <section class="keys">
        ${this.keys.map((k, i) => html`<div class="key ${i === 0 ? "wide" : ""}">${k}</div>`)}
      </section>`;
  }
}
